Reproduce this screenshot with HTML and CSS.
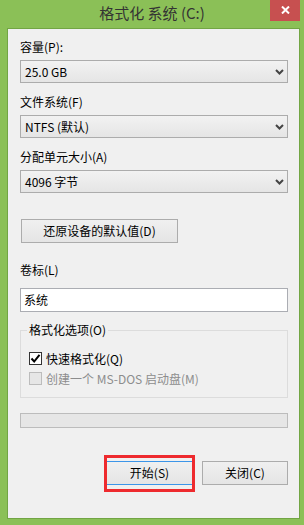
FILE: index.html
```html
<!DOCTYPE html>
<html lang="zh-CN">
<head>
    <meta charset="UTF-8">
    <meta name="viewport" content="width=device-width, initial-scale=1.0">
    <title>格式化 系统 (C:)</title>
    <link rel="stylesheet" href="styles.css">
</head>
<body>
    <div class="window">
        <!-- Barra de título -->
        <div class="titlebar">
            <span></span>
            <span class="title">格式化 系统 (C:)</span>
            <span class="close">
                <svg width="9" height="8" viewBox="0 0 9 8"><path d="M1 0.5 L8 7.5 M8 0.5 L1 7.5" stroke="#fff" stroke-width="2"/></svg>
            </span>
        </div>

        <!-- Área do diálogo -->
        <div class="client">
            <div class="field-label first">容量(P):</div>
            <div class="select">
                <span>25.0 GB</span>
                <svg class="chevron" width="9" height="6" viewBox="0 0 9 6"><path d="M1 1 L4.5 4.5 L8 1" fill="none" stroke="#444" stroke-width="2"/></svg>
            </div>

            <div class="field-label">文件系统(F)</div>
            <div class="select">
                <span>NTFS (默认)</span>
                <svg class="chevron" width="9" height="6" viewBox="0 0 9 6"><path d="M1 1 L4.5 4.5 L8 1" fill="none" stroke="#444" stroke-width="2"/></svg>
            </div>

            <div class="field-label">分配单元大小(A)</div>
            <div class="select">
                <span>4096 字节</span>
                <svg class="chevron" width="9" height="6" viewBox="0 0 9 6"><path d="M1 1 L4.5 4.5 L8 1" fill="none" stroke="#444" stroke-width="2"/></svg>
            </div>

            <button class="btn restore">还原设备的默认值(D)</button>

            <div class="field-label volume">卷标(L)</div>
            <div class="textbox">系统</div>

            <fieldset class="group">
                <legend>格式化选项(O)</legend>
                <div class="check-row">
                    <span class="checkbox">
                        <svg width="11" height="11" viewBox="0 0 11 11"><path d="M1.5 5.5 L4.2 8.5 L9.5 1.8" fill="none" stroke="#000" stroke-width="2"/></svg>
                    </span>
                    <span>快速格式化(Q)</span>
                </div>
                <div class="check-row disabled">
                    <span class="checkbox"></span>
                    <span>创建一个 MS-DOS 启动盘(M)</span>
                </div>
            </fieldset>

            <div class="progress"></div>

            <div class="actions">
                <div class="highlight">
                    <button class="btn default">开始(S)</button>
                </div>
                <button class="btn">关闭(C)</button>
            </div>
        </div>
    </div>
</body>
</html>
```

FILE: styles.css
```css
body {
    margin: 0;
    padding: 0;
    background-color: #8bc057;
    font-family: "Noto Sans CJK SC", "Noto Sans", sans-serif;
    font-size: 12px;
    color: #000;
}
.window {
    width: 304px;
    height: 525px;
    display: flex;
    flex-direction: column;
}
.titlebar {
    height: 28px;
    display: grid;
    grid-template-columns: 1fr auto 1fr;
    align-items: start;
}
.title {
    font-size: 15px;
    line-height: 26px;
    color: #333;
}
.close {
    justify-self: end;
    width: 30px;
    height: 21px;
    margin-right: 4px;
    background-color: #c75050;
    display: flex;
    justify-content: center;
    align-items: center;
}
.close svg {
    margin-top: -2px;
}
.client {
    margin: 0 4px 6px 7px;
    height: 491px;
    box-sizing: border-box;
    border: 1px solid #72a544;
    background-color: #f0f0f0;
    padding: 10px 11px 0 12px;
}
.field-label {
    line-height: 16px;
    height: 16px;
    margin-top: 11px;
    margin-bottom: 5px;
}
.field-label.first {
    margin-top: 0;
}
.select {
    height: 23px;
    box-sizing: border-box;
    border: 1px solid #acacac;
    background: linear-gradient(#f2f2f2, #e5e5e5);
    display: flex;
    align-items: center;
    justify-content: space-between;
    padding: 0 3px 0 4px;
    line-height: 16px;
}
.chevron {
    margin-top: 1px;
}
.btn {
    font-family: inherit;
    font-size: 12px;
    color: #000;
    height: 24px;
    box-sizing: border-box;
    border: 1px solid #acacac;
    background: linear-gradient(#f0f0f0, #e5e5e5);
    padding: 0;
    margin: 0;
    line-height: 16px;
}
.restore {
    display: block;
    width: 157px;
    margin-top: 26px;
    margin-left: 1px;
}
.field-label.volume {
    margin-top: 19px;
    margin-bottom: 10px;
}
.textbox {
    height: 24px;
    box-sizing: border-box;
    border: 1px solid #abadb3;
    background-color: #fff;
    padding: 0 3px;
    line-height: 22px;
}
.group {
    margin: 11px 0 0 0;
    border: 1px solid #dcdcdc;
    padding: 11px 6px 9px 8px;
    min-width: 0;
}
.group legend {
    padding: 0 2px;
    margin-left: -2px;
    line-height: 14px;
}
.check-row {
    display: flex;
    align-items: center;
    height: 20px;
    gap: 4px;
}
.checkbox {
    width: 13px;
    height: 13px;
    box-sizing: border-box;
    border: 1px solid #333;
    background-color: #fff;
    display: flex;
    justify-content: center;
    align-items: center;
}
.disabled {
    color: #8d8d8d;
}
.disabled .checkbox {
    border-color: #bcbcbc;
    background-color: #e6e6e6;
}
.progress {
    height: 15px;
    box-sizing: border-box;
    margin-top: 15px;
    border: 1px solid #bcbcbc;
    background-color: #e6e6e6;
}
.actions {
    margin-top: 33px;
    display: flex;
    justify-content: flex-end;
    gap: 9px;
}
.actions .btn {
    width: 86px;
}
.highlight {
    position: relative;
}
.highlight::after {
    content: "";
    position: absolute;
    top: -6px;
    bottom: -7px;
    left: -2px;
    right: -2px;
    border: 3px solid #ee2a2e;
}
.btn.default {
    display: block;
    width: 87px;
    border-color: #3c95e8;
}
```
